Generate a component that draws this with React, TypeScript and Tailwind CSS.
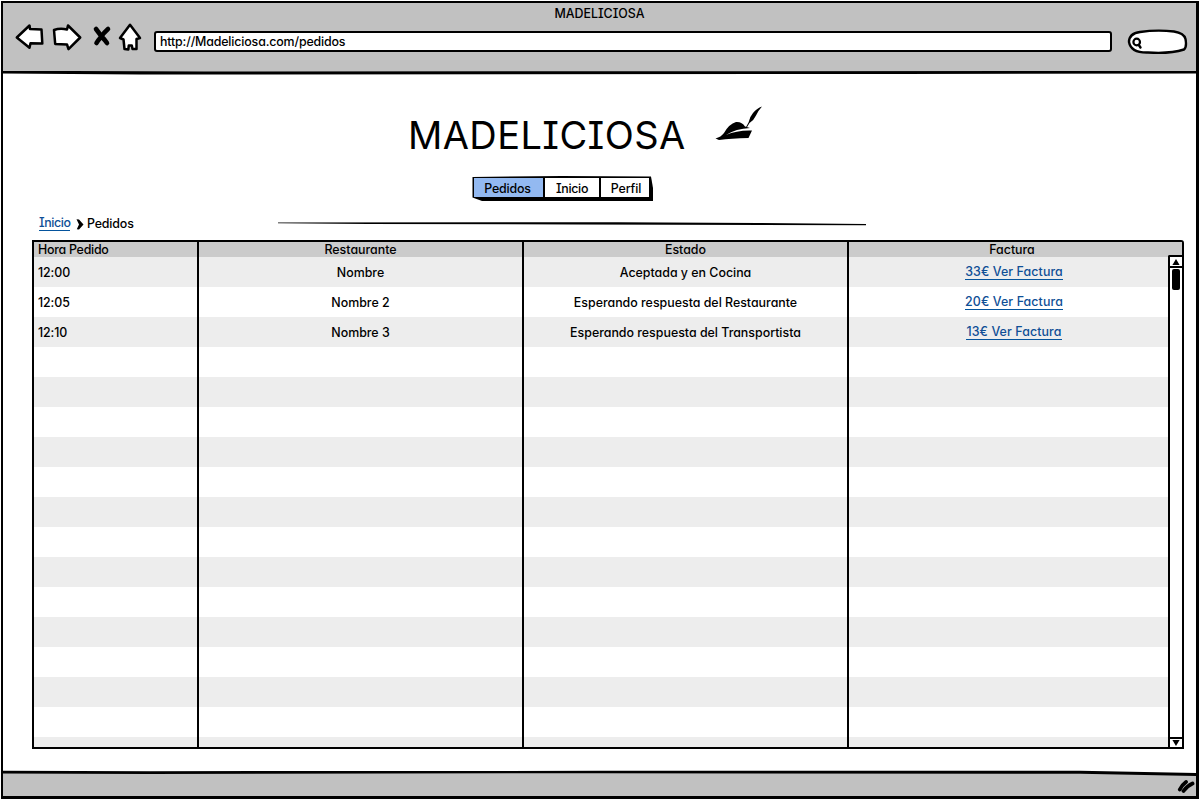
import React from "react";

type Row = { time: string; place: string; status: string; bill: string };

const rows: Row[] = [
  { time: "12:00", place: "Nombre", status: "Aceptada y en Cocina", bill: "33€ Ver Factura" },
  { time: "12:05", place: "Nombre 2", status: "Esperando respuesta del Restaurante", bill: "20€ Ver Factura" },
  { time: "12:10", place: "Nombre 3", status: "Esperando respuesta del Transportista", bill: "13€ Ver Factura" },
];
const emptyRows = Array.from({ length: 13 }, (_, i) => i);

function NavIcons() {
  return (
    <svg width="130" height="34" viewBox="14 21 130 34" className="block shrink-0" fill="#fff" stroke="#000" strokeWidth="2.5" strokeLinejoin="round">
      <path d="M16.800 37.500L29.500 25.500L30 29L41.500 29.500L42.300 43.500L30.500 43.200L29.500 47.800Z" />
      <path d="M54 30Q60 28 67 29.500L68 25.500L80.200 37.500L68.500 49.200L67 44.500L55.200 44Z" />
      <path d="M96 29Q99 33 102 37Q105 40 107 43M108 29Q103.500 33 101 37Q97.500 41 96.500 43" fill="none" strokeWidth="4.600" strokeLinecap="round" />
      <path d="M130 24.800L140 38L136.500 39L136.500 49L132.500 49L131.800 45.500L128.800 45.500L128.300 49.500L124.500 49L123.500 39.500L120 38Z" />
    </svg>
  );
}

function SearchBox() {
  return (
    <svg width="62" height="26" viewBox="1126 28 62 26" className="mt-[7px] ml-[14px] block shrink-0" fill="#fff" stroke="#000" strokeWidth="2.400" strokeLinecap="round">
      <path d="M1129 41Q1129 32.500 1140 31Q1157 28.500 1174 30.500Q1184 32 1185.500 38Q1187 46 1184 48.500Q1170 53 1148 51.500Q1131 52 1129 41Z" />
      <circle cx="1136.700" cy="41" r="3.300" strokeWidth="2.200" />
      <path d="M1138.800 44L1140.500 46.500" strokeWidth="2.400" />
    </svg>
  );
}

function Feather() {
  return (
    <svg width="48" height="36" viewBox="715 104 48 36" className="block shrink-0">
      <path d="M715.500 137.500Q721 136 724 132Q729 123 736 121Q742 120.500 745 125.500L750 127Q736 127.500 726 134Q737 129 752 129.500L748.500 137Q731 137.500 719 139Z" />
      <path d="M745.500 127L748.500 121.500Q749.500 116 753 112Q757 107 762 105.500Q757.500 110.500 756 114.500Q754 119 749.500 122L746.500 127Z" />
    </svg>
  );
}

export default function App() {
  return (
    <div className="h-[800px] w-[1200px] bg-white p-px font-['Inter',sans-serif] text-[12.4px] leading-[15px] font-medium whitespace-nowrap text-black [font-feature-settings:'cv08','cv11']">
      <div className="flex h-[798px] flex-col overflow-hidden border-t-2 border-r-[3px] border-b-[3px] border-l-2 border-black">
        <header className="flex h-[68px] shrink-0 flex-col bg-[#c1c1c1]">
          <div className="flex h-[18px] items-center justify-center pt-0.5 text-[12.4px]">MADELICIOSA</div>
          <div className="flex h-[34px] items-center pl-[11px]">
            <NavIcons />
            <div className="mt-[7px] ml-[10px] flex h-[21px] w-[958px] shrink-0 items-center rounded-[3px] border-2 border-black bg-white pb-px pl-1 tracking-[-0.15px]">
              http://Madeliciosa.com/pedidos
            </div>
            <SearchBox />
          </div>
        </header>
        <svg width="1194" height="4" viewBox="3 71 1194 4" className="block shrink-0">
          <rect x="3" y="71" width="1194" height="1.500" fill="#c1c1c1" />
          <path d="M3 70.800L140 71.200L204 71.500L600 71.200L1197 71V73.500L900 74L204 74.500L140 74.500L3 73.500Z" />
        </svg>

        <main className="flex h-[695px] shrink-0 flex-col pl-[29px]">
          <div className="flex h-[101px] items-center pl-[376px]">
            <h1 className="w-[277px] pt-[18px] text-[38px] leading-none font-normal tracking-[0.4px]">MADELICIOSA</h1>
            <div className="ml-[30px] pb-[6px]"><Feather /></div>
          </div>

          <nav className="ml-[440px] flex h-[25px] w-[181px] shrink-0 border-t-2 border-r-4 border-b-4 border-l-2 border-black bg-white [clip-path:polygon(0.5px_1px,90px_0,179px_0.5px,181px_12px,181px_25px,10px_25px,0.5px_21.5px)]">
            <a className="flex w-[71px] items-center justify-center border-r-2 border-black bg-[#93b9f1] pt-0.5 pr-0.5 tracking-[-0.2px]">Pedidos</a>
            <a className="flex w-[56px] items-center justify-center border-r-2 border-black pt-0.5 tracking-[-0.3px]">Inicio</a>
            <a className="flex flex-1 items-center justify-center pt-0.5 pl-0.5 tracking-[-0.1px]">Perfil</a>
          </nav>

          <div className="flex h-[39px] shrink-0 items-center pt-1.5 pl-[7px]">
            <a className="w-[31px] border-b border-[#04549d] leading-[14px] tracking-[-0.4px] text-[#0f4f96]">Inicio</a>
            <svg width="8" height="11" viewBox="0 0 8 10" preserveAspectRatio="none" className="mt-0.5 ml-1.5">
              <path d="M0.500 0.300L3 0.500L7.500 5L3 9.500L0.800 9.300L3 5Z" />
            </svg>
            <span className="ml-[3px] tracking-[-0.15px]">Pedidos</span>
            <svg width="588" height="4" viewBox="0 0 588 4" className="ml-[144px]">
              <path d="M0 0.500L340 0.300L480 1L588 2V3.200L300 2.500L90 1.900L0 1.300Z" />
            </svg>
          </div>

          <section className="flex h-[509px] w-[1152px] shrink-0 flex-col rounded-tr-[3px] border-2 border-black">
            <div className="grid h-[15px] shrink-0 grid-cols-[165px_325px_325px_1fr] bg-[#cbcbcb] text-center">
              <span className="border-r-2 border-black pl-1 text-left tracking-[-0.25px]">Hora Pedido</span>
              <span className="border-r-2 border-black">Restaurante</span>
              <span className="border-r-2 border-black">Estado</span>
              <span className="pr-[7px]">Factura</span>
            </div>
            <div className="flex min-h-0 flex-1">
              <div className="h-full flex-1 overflow-hidden">
                {rows.map((r) => (
                  <div key={r.time} className="grid h-[30px] grid-cols-[165px_325px_325px_1fr] text-center leading-[32px] odd:bg-[#ededed]">
                    <span className="border-r-2 border-black pl-1">
                      <span className="block text-left tracking-[-0.1px]">{r.time}</span>
                    </span>
                    <span className="border-r-2 border-black">{r.place}</span>
                    <span className="border-r-2 border-black">{r.status}</span>
                    <span className="flex justify-center pt-2 pl-[11px]">
                      <a className="h-[15px] border-b border-[#04549d] leading-[14px] tracking-[0.1px] text-[#0f4f96]">{r.bill}</a>
                    </span>
                  </div>
                ))}
                {emptyRows.map((i) => (
                  <div key={i} className="grid h-[30px] grid-cols-[165px_325px_325px_1fr] odd:bg-[#ededed]">
                    <span className="border-r-2 border-black" />
                    <span className="border-r-2 border-black" />
                    <span className="border-r-2 border-black" />
                  </div>
                ))}
                <div className="grid h-[10px] grid-cols-[165px_325px_325px_1fr] bg-[#ededed]">
                  <span className="border-r-2 border-black" />
                  <span className="border-r-2 border-black" />
                  <span className="border-r-2 border-black" />
                </div>
              </div>
              <div className="-mt-0.5 flex w-[14px] flex-col rounded-tl-[2px] border-t-2 border-l-2 border-black bg-white">
                <div className="flex h-[11px] items-center justify-center border-b-2 border-black">
                  <svg width="8" height="6" viewBox="0 0 8 6"><path d="M4 0L7.600 6H0.400Z" /></svg>
                </div>
                <div className="mx-auto mt-px h-[21px] w-2 rounded-[2px] bg-black" />
                <div className="mt-auto flex h-[10px] items-center justify-center border-t-2 border-black">
                  <svg width="8" height="6" viewBox="0 0 8 6"><path d="M0.400 0H7.600L4 6Z" /></svg>
                </div>
              </div>
            </div>
          </section>
        </main>

        <svg width="1194" height="6" viewBox="3 770 1194 6" className="block shrink-0">
          <path d="M3 772H800L1197 774V776H3Z" fill="#c1c1c1" />
          <path d="M3 770.800L150 771.200L600 770.800L1080 770.800L1197 773V776L1080 773.800L600 773.200L150 774L3 773.400Z" />
        </svg>
        <footer className="flex flex-1 items-center justify-end bg-[#c1c1c1] pr-px">
          <svg width="18" height="14" viewBox="1177 781 18 14" className="mt-0.5">
            <path d="M1179.800 790.500Q1182 786 1186 783M1183.500 792Q1187 787 1192.500 784.500" fill="none" stroke="#000" strokeWidth="3.800" strokeLinecap="round" />
          </svg>
        </footer>
      </div>
    </div>
  );
}
